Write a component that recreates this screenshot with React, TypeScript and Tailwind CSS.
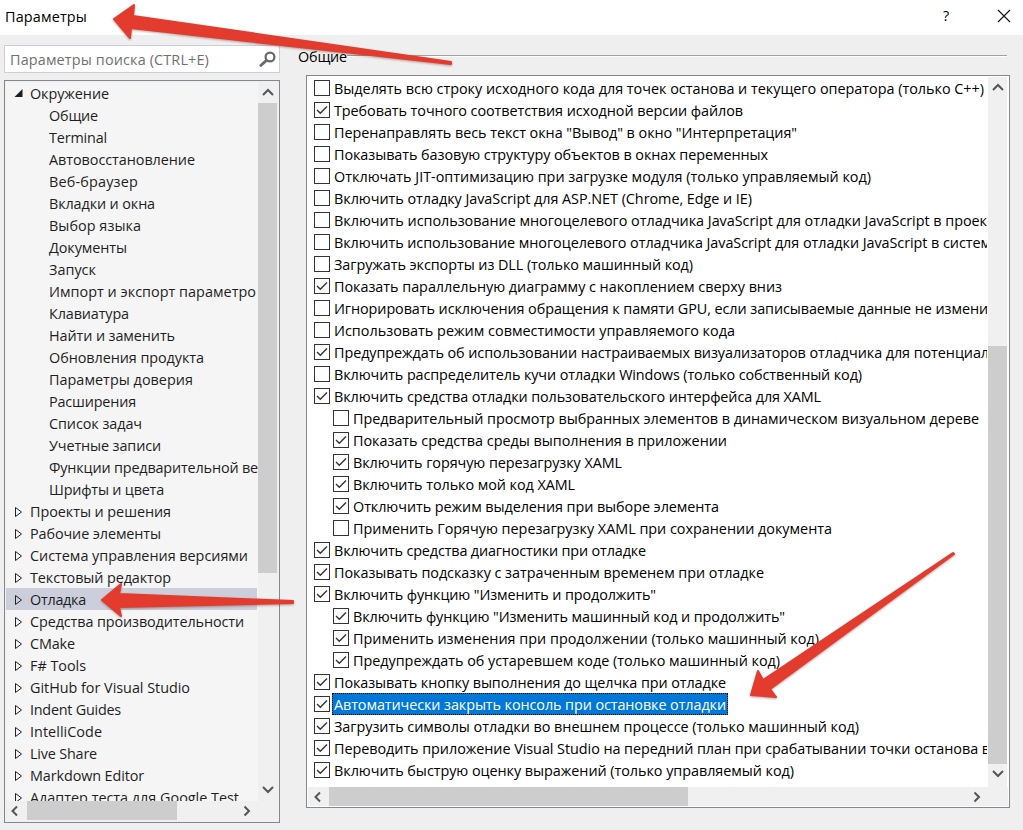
import { useLayoutEffect, useRef } from "react";
import clsx from "clsx";

type TreeRow = [label: string, width: number, kind: "open" | "child" | "closed", selected?: boolean];
type OptionRow = [label: string, width: number, checked: boolean, nested?: boolean, selected?: boolean];

const tree: TreeRow[] = [
  ["Окружение", 79, "open"],
  ["Общие", 49, "child"],
  ["Terminal", 58, "child"],
  ["Автовосстановление", 146, "child"],
  ["Веб-браузер", 89, "child"],
  ["Вкладки и окна", 106, "child"],
  ["Выбор языка", 92, "child"],
  ["Документы", 78, "child"],
  ["Запуск", 47, "child"],
  ["Импорт и экспорт параметро", 207, "child"],
  ["Клавиатура", 80, "child"],
  ["Найти и заменить", 126, "child"],
  ["Обновления продукта", 155, "child"],
  ["Параметры доверия", 144, "child"],
  ["Расширения", 87, "child"],
  ["Список задач", 93, "child"],
  ["Учетные записи", 112, "child"],
  ["Функции предварительной ве", 209, "child"],
  ["Шрифты и цвета", 115, "child"],
  ["Проекты и решения", 141, "closed"],
  ["Рабочие элементы", 131, "closed"],
  ["Система управления версиями", 218, "closed"],
  ["Текстовый редактор", 141, "closed"],
  ["Отладка", 56, "closed", true],
  ["Средства производительности", 214, "closed"],
  ["CMake", 45, "closed"],
  ["F# Tools", 56, "closed"],
  ["GitHub for Visual Studio", 160, "closed"],
  ["Indent Guides", 91, "closed"],
  ["IntelliCode", 72, "closed"],
  ["Live Share", 67, "closed"],
  ["Markdown Editor", 114, "closed"],
  ["Адаптер теста для Google Test", 209, "closed"],
];

const options: OptionRow[] = [
  ["Выделять всю строку исходного кода для точек останова и текущего оператора (только C++)", 650, false],
  ["Требовать точного соответствия исходной версии файлов", 409, true],
  ["Перенаправлять весь текст окна \"Вывод\" в окно \"Интерпретация\"", 463, false],
  ["Показывать базовую структуру объектов в окнах переменных", 434, false],
  ["Отключать JIT-оптимизацию при загрузке модуля (только управляемый код)", 537, false],
  ["Включить отладку JavaScript для ASP.NET (Chrome, Edge и IE)", 418, false],
  ["Включить использование многоцелевого отладчика JavaScript для отладки JavaScript в проек", 653, false],
  ["Включить использование многоцелевого отладчика JavaScript для отладки JavaScript в систем", 657, false],
  ["Загружать экспорты из DLL (только машинный код)", 359, false],
  ["Показать параллельную диаграмму с накоплением сверху вниз", 448, true],
  ["Игнорировать исключения обращения к памяти GPU, если записываемые данные не измени", 654, false],
  ["Использовать режим совместимости управляемого кода", 401, false],
  ["Предупреждать об использовании настраиваемых визуализаторов отладчика для потенциал", 655, true],
  ["Включить распределитель кучи отладки Windows (только собственный код)", 528, false],
  ["Включить средства отладки пользовательского интерфейса для XAML", 487, true],
  ["Предварительный просмотр выбранных элементов в динамическом визуальном дереве", 626, false, true],
  ["Показать средства среды выполнения в приложении", 374, true, true],
  ["Включить горячую перезагрузку XAML", 269, true, true],
  ["Включить только мой код XAML", 222, true, true],
  ["Отключить режим выделения при выборе элемента", 366, true, true],
  ["Применить Горячую перезагрузку XAML при сохранении документа", 479, false, true],
  ["Включить средства диагностики при отладке", 312, true],
  ["Показывать подсказку с затраченным временем при отладке", 430, true],
  ["Включить функцию \"Изменить и продолжить\"", 322, true],
  ["Включить функцию \"Изменить машинный код и продолжить\"", 432, true, true],
  ["Применить изменения при продолжении (только машинный код)", 466, true, true],
  ["Предупреждать об устаревшем коде (только машинный код)", 427, true, true],
  ["Показывать кнопку выполнения до щелчка при отладке", 392, true],
  ["Автоматически закрыть консоль при остановке отладки", 392, true, false, true],
  ["Загрузить символы отладки во внешнем процессе (только машинный код)", 525, true],
  ["Переводить приложение Visual Studio на передний план при срабатывании точки останова в", 656, true],
  ["Включить быструю оценку выражений (только управляемый код)", 460, true],
];

/** Text whose tracking is adjusted so the label takes the given width. */
function Label({ text, width }: { text: string; width: number }) {
  const ref = useRef<HTMLSpanElement>(null);
  useLayoutEffect(() => {
    const el = ref.current;
    if (!el) return;
    el.style.letterSpacing = "0px";
    const natural = el.getBoundingClientRect().width;
    el.style.letterSpacing = `${(width - natural) / text.length}px`;
  }, [text, width]);
  return (
    <span ref={ref} className="inline-block shrink-0 translate-y-px whitespace-pre">
      {text}
    </span>
  );
}

function Chevron({ dir }: { dir: "up" | "down" | "left" | "right" }) {
  const d = {
    up: "M1 8 L6 3 L11 8",
    down: "M1 3 L6 8 L11 3",
    left: "M8 1.5 L3.5 6 L8 10.5",
    right: "M3.5 1.5 L8 6 L3.5 10.5",
  }[dir];
  return (
    <svg className="size-3 shrink-0" viewBox="0 0 12 12" fill="none" stroke="#555" strokeWidth="2">
      <path d={d} />
    </svg>
  );
}

function Checkbox({ checked }: { checked: boolean }) {
  return (
    <span className="flex size-4 shrink-0 items-center justify-center border border-[#333] bg-white">
      {checked && (
        <svg className="size-[14px]" viewBox="0 0 14 14" fill="none" stroke="#333" strokeWidth="1.4">
          <path d="M2 7 L5.3 10.2 L12 3.6" />
        </svg>
      )}
    </span>
  );
}

function Expander({ open }: { open: boolean }) {
  return (
    <svg className="h-3 w-[10px] shrink-0 translate-y-px" viewBox="0 0 10 12">
      {open ? (
        <path d="M8.5 1 V9 H0.5 Z" fill="#1e1e1e" />
      ) : (
        <path d="M1.5 1.5 L7.5 6 L1.5 10.5 Z" fill="none" stroke="#222" strokeWidth="1" />
      )}
    </svg>
  );
}

function TitleBar() {
  return (
    <header className="flex h-[35px] shrink-0 items-center bg-white pb-[3px] pl-[5px] text-black">
      <Label text="Параметры" width={82} />
      <span className="ml-auto w-[10px] text-center">?</span>
      <svg className="mr-[12px] ml-[46px] size-[14px]" viewBox="0 0 14 14" fill="none" stroke="#111" strokeWidth="1.1">
        <path d="M1 1 L13 13 M13 1 L1 13" />
      </svg>
    </header>
  );
}

function Sidebar() {
  return (
    <aside className="flex w-[276px] shrink-0 flex-col gap-[7px] pt-[10px]">
      <div className="flex h-[28px] items-center border border-[#ccceda] bg-white pr-[3px] pl-[5px] text-[#707070]">
        <Label text="Параметры поиска (CTRL+E)" width={199} />
        <svg className="ml-auto size-[17px]" viewBox="0 0 17 17" fill="none" stroke="#6a6a6a">
          <circle cx="11" cy="6" r="4.4" strokeWidth="2.3" />
          <path d="M7.8 9 L1 15.2" strokeWidth="2.8" />
        </svg>
      </div>
      <div className="flex h-[743px] flex-col border border-[#828790] bg-[#f0f0f0] p-px">
        <div className="flex h-[719px] shrink-0">
          <div className="h-[719px] w-[252px] overflow-hidden bg-[#f5f5f5] pr-px">
            {tree.map(([label, width, kind, selected]) => (
              <div
                key={label}
                className={clsx(
                  "flex h-[22px] items-center text-[#1e1e1e]",
                  kind === "child" ? "pl-[43px]" : "gap-[6px] pl-[8px]",
                  selected && "bg-[#cccedb]",
                )}
              >
                {kind !== "child" && <Expander open={kind === "open"} />}
                <Label text={label} width={width} />
              </div>
            ))}
          </div>
          <div className="flex w-[19px] flex-col items-center">
            <div className="flex h-[21px] items-center">
              <Chevron dir="up" />
            </div>
            <div className="h-[470px] w-full bg-[#cdcdcd]" />
            <div className="mt-auto flex h-[23px] items-center">
              <Chevron dir="down" />
            </div>
          </div>
        </div>
        <div className="flex h-[19px] w-[251px] items-center">
          <div className="flex w-[21px] pl-[3px]">
            <Chevron dir="left" />
          </div>
          <div className="h-full w-[150px] bg-[#cdcdcd]" />
          <div className="ml-auto flex w-[21px] justify-center">
            <Chevron dir="right" />
          </div>
        </div>
      </div>
    </aside>
  );
}

function OptionsPanel() {
  return (
    <main className="ml-[18px] flex w-[712px] shrink-0 flex-col text-black">
      <div className="flex h-[40px] items-center pt-px">
        <Label text="Общие" width={49} />
        <div className="h-[2px] w-[660px] shrink-0 border-t border-b border-t-[#a0a0a0] border-b-white" />
      </div>
      <div className="ml-[8px] flex h-[733px] flex-col border border-[#828790] bg-white p-px">
        <div className="flex h-[710px] shrink-0">
          <div className="w-[680px] pr-px">
            <div className="overflow-hidden">
              {options.map(([label, width, checked, nested, selected]) => (
                <div key={label} className={clsx("flex h-[22px] items-center", nested ? "pl-[25px]" : "pl-[6px]")}>
                  <Checkbox checked={checked} />
                  <div
                    className={clsx(
                      "ml-[2px] flex h-[22px] shrink-0 items-center border pl-px",
                      selected
                        ? "border-dotted border-black bg-[#0078d7] pr-px text-white"
                        : "border-transparent",
                    )}
                  >
                    <Label text={label} width={width} />
                  </div>
                </div>
              ))}
            </div>
          </div>
          <div className="flex w-[19px] flex-col bg-[#f0f0f0]">
            <div className="flex h-[22px] items-center justify-center">
              <Chevron dir="up" />
            </div>
            <div className="mt-auto h-[418px] w-full bg-[#cdcdcd]" />
            <div className="flex h-[23px] items-start justify-center pt-[4px]">
              <Chevron dir="down" />
            </div>
          </div>
        </div>
        <div className="flex h-[19px] w-full items-center bg-[#f0f0f0]">
          <div className="flex w-[21px] pl-[4px]">
            <Chevron dir="left" />
          </div>
          <div className="h-full w-[359px] bg-[#cdcdcd]" />
          <div className="mr-[21px] ml-auto flex w-[21px] justify-center">
            <Chevron dir="right" />
          </div>
        </div>
      </div>
    </main>
  );
}

function Arrows() {
  return (
    <svg
      className="pointer-events-none absolute inset-0 h-[830px] w-[1023px] drop-shadow-[0_1px_1px_rgba(90,50,40,0.45)]"
      viewBox="0 0 1023 830"
      fill="#e33b2e"
      stroke="#e33b2e"
      strokeWidth="2"
      strokeLinejoin="round"
    >
      <path d="M114 19 L134 5 L133 16 L451 62 L451 64 L131 28 L130 38 Z" />
      <path d="M102 600 L121 584 L119 594 L293 601 L293 603 L119 607 L121 616 Z" />
      <path d="M751 695 L758 671 L763 680 L953 553 L954 554 L770 689 L776 697 Z" />
    </svg>
  );
}

export default function App() {
  return (
    <div className="relative flex h-[830px] w-[1023px] flex-col overflow-hidden bg-[#efefef] font-['Open_Sans','Noto_Sans',sans-serif] text-[14.4px] leading-[22px]">
      <TitleBar />
      <div className="flex pl-[4px]">
        <Sidebar />
        <OptionsPanel />
      </div>
      <Arrows />
    </div>
  );
}
